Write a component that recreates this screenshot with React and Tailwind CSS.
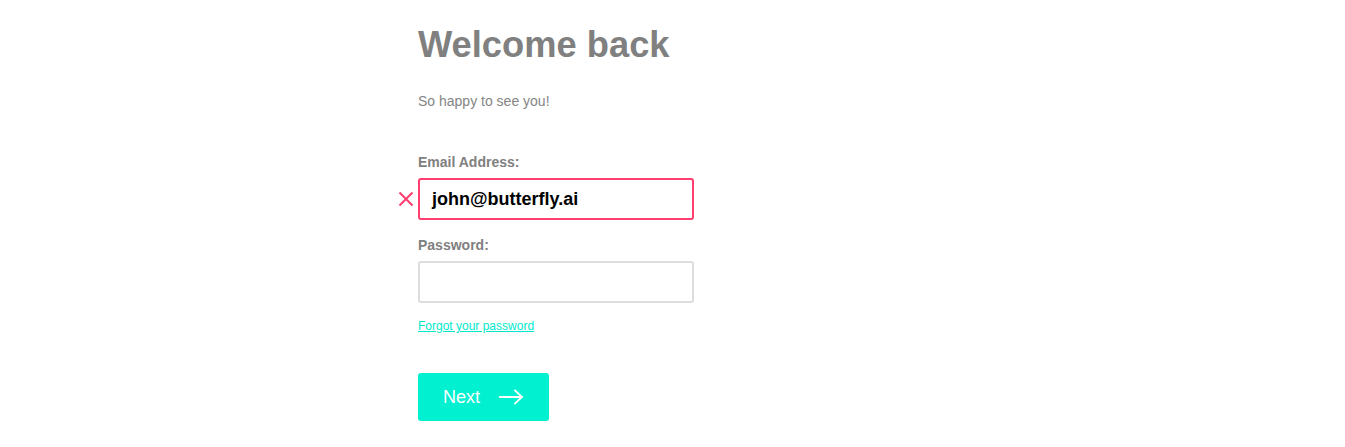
import React from 'react';

const font = { fontFamily: '"Liberation Sans", Arial, sans-serif' };

const ErrorMark = () => (
  <svg className="absolute -left-[20px] top-[13px] w-[16px] h-[16px]" viewBox="0 0 16 16" fill="none">
    <path d="M1.5 1.5 L14.5 14.5 M14.5 1.5 L1.5 14.5" stroke="#ff3d6e" strokeWidth="2" />
  </svg>
);

const Arrow = () => (
  <svg className="w-[25px] h-[16px]" viewBox="0 0 25 16" fill="none">
    <path d="M1 8 H23 M16 1.5 L23 8 L16 14.5" stroke="#ffffff" strokeWidth="1.8" strokeLinecap="square" />
  </svg>
);

export default function App() {
  return (
    <div className="min-h-[447px] bg-white pl-[418px] pt-[27px]" style={font}>
      <div className="flex flex-col w-[276px]">
        <h1 className="text-[36.3px] leading-[36px] font-bold text-[#808080] whitespace-nowrap">Welcome back</h1>
        <p className="mt-[28px] text-sm leading-5 text-[#858585]">So happy to see you!</p>

        <label className="mt-[41px] text-sm leading-5 font-bold text-[#808080]">Email Address:</label>
        <div className="relative mt-[6px]">
          <ErrorMark />
          <div className="h-[42px] border-2 border-[#ff3d6e] rounded-[3px] flex items-center pl-[12px] text-[18px] font-bold text-black">
            john@butterfly.ai
          </div>
        </div>

        <label className="mt-[15px] text-sm leading-5 font-bold text-[#808080]">Password:</label>
        <div className="mt-[6px] h-[42px] border-2 border-[#dddddd] rounded-[3px]"></div>

        <a href="#" className="mt-[15px] text-xs leading-4 text-[#00e8cc] underline self-start">Forgot your password</a>

        <button className="mt-[39px] self-start w-[131px] h-[48px] rounded-[3px] bg-[#00f0d0] text-white text-[18px] flex items-center pl-[25px] gap-[19px]">
          <span>Next</span>
          <Arrow />
        </button>
      </div>
    </div>
  );
}
